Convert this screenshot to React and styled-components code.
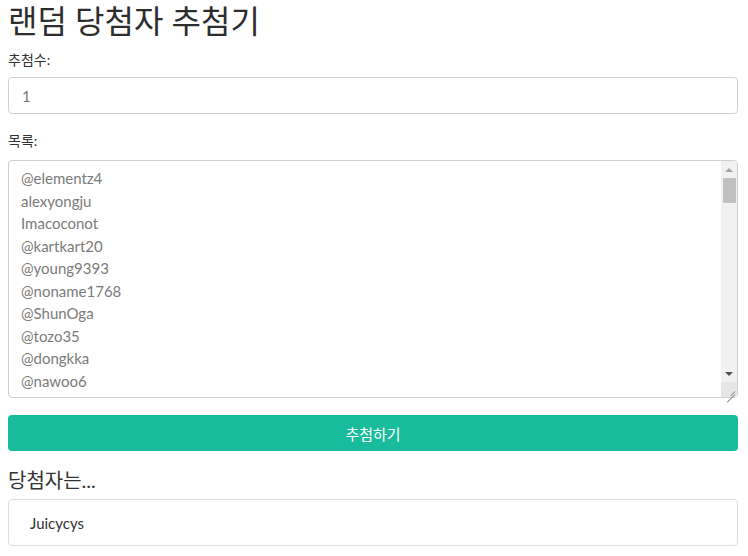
import React from "react";
import styled, { createGlobalStyle } from "styled-components";

const Global = createGlobalStyle`
  html, body { margin: 0; padding: 0; background: #fff; }
  body { font-family: Lato, "Noto Sans CJK KR", sans-serif; color: #333; }
  * { box-sizing: border-box; }
`;

const Page = styled.div`
  display: flex;
  flex-direction: column;
  padding: 0 10px 0 8px;
`;

const Title = styled.h1`
  margin: 0;
  font-family: Lato, "Noto Sans CJK KR", sans-serif;
  font-weight: 400;
  font-size: 32px;
  line-height: 42px;
  color: #2d2d2d;
`;

const Label = styled.label`
  display: block;
  margin-top: ${(p) => p.$mt}px;
  font-size: 14px;
  line-height: 20px;
  color: #333;
`;

const Input = styled.input`
  margin-top: 7px;
  height: 37px;
  width: 100%;
  border: 1px solid #cfcfcf;
  border-radius: 4px;
  padding: 0 13px;
  font-family: Lato, "Noto Sans CJK KR", sans-serif;
  font-size: 15px;
  color: #7b7b7b;
  outline: none;
`;

const AreaWrap = styled.div`
  position: relative;
  margin-top: 9px;
  height: 238px;
`;

const TextArea = styled.textarea`
  display: block;
  height: 100%;
  width: 100%;
  border: 1px solid #cfcfcf;
  border-radius: 4px;
  padding: 6px 28px 7px 12px;
  font-family: Lato, "Noto Sans CJK KR", sans-serif;
  font-size: 15px;
  line-height: 22.5px;
  color: #7b7b7b;
  outline: none;
  resize: none;
  overflow: hidden;
`;

const ScrollBar = styled.div`
  position: absolute;
  top: 1px;
  right: 1px;
  bottom: 1px;
  width: 16px;
  display: flex;
  flex-direction: column;
  background: #f1f1f1;
  border-radius: 0 3px 3px 0;
  pointer-events: none;
`;

const Arrow = styled.div`
  height: 17px;
  display: flex;
  align-items: center;
  justify-content: center;
  &::before {
    content: "";
    width: 0;
    height: 0;
    border-left: 4px solid transparent;
    border-right: 4px solid transparent;
    ${(p) =>
      p.$dir === "up"
        ? `border-bottom: 4px solid #a3a3a3;`
        : `border-top: 4px solid #505050;`}
  }
`;

const Track = styled.div`
  flex: 1;
  padding: 0 1px 0 2px;
`;

const Thumb = styled.div`
  height: 25px;
  background: #c1c1c1;
`;

const Corner = styled.div`
  height: 15px;
  background: #e6e6e6;
  position: relative;
  &::before,
  &::after {
    content: "";
    position: absolute;
    height: 1px;
    background: #8a8a8a;
    transform: rotate(-45deg);
    transform-origin: right center;
  }
  &::before {
    right: 2px;
    bottom: 2px;
    width: 11px;
  }
  &::after {
    right: 2px;
    bottom: 2px;
    width: 6px;
    transform: translate(0, -3px) rotate(-45deg);
  }
`;

const Button = styled.button`
  margin-top: 17px;
  height: 36px;
  width: 100%;
  border: none;
  border-radius: 4px;
  background: #18bc9c;
  color: #fff;
  font-family: Lato, "Noto Sans CJK KR", sans-serif;
  font-size: 15px;
  cursor: pointer;
`;

const SubTitle = styled.h3`
  margin: 15px 0 0;
  font-weight: 400;
  font-size: 20px;
  line-height: 28px;
  color: #333;
`;

const Result = styled.div`
  margin-top: 5px;
  height: 47px;
  display: flex;
  align-items: center;
  padding: 0 21px;
  border: 1px solid #dddddd;
  border-radius: 4px;
  font-size: 15px;
  color: #333;
`;

const base = [
  "@elementz4",
  "alexyongju",
  "Imacoconot",
  "@kartkart20",
  "@young9393",
  "@noname1768",
  "@ShunOga",
  "@tozo35",
  "@dongkka",
  "@nawoo6",
];
const listText = base.join("\n");

export default function App() {
  return (
    <>
      <Global />
      <Page>
        <Title>랜덤 당첨자 추첨기</Title>
        <Label $mt={8}>추첨수:</Label>
        <Input defaultValue="1" />
        <Label $mt={17}>목록:</Label>
        <AreaWrap>
          <TextArea defaultValue={listText} />
          <ScrollBar>
            <Arrow $dir="up" />
            <Track>
              <Thumb />
            </Track>
            <Arrow $dir="down" />
            <Corner />
          </ScrollBar>
        </AreaWrap>
        <Button>추첨하기</Button>
        <SubTitle>당첨자는...</SubTitle>
        <Result>Juicycys</Result>
      </Page>
    </>
  );
}
